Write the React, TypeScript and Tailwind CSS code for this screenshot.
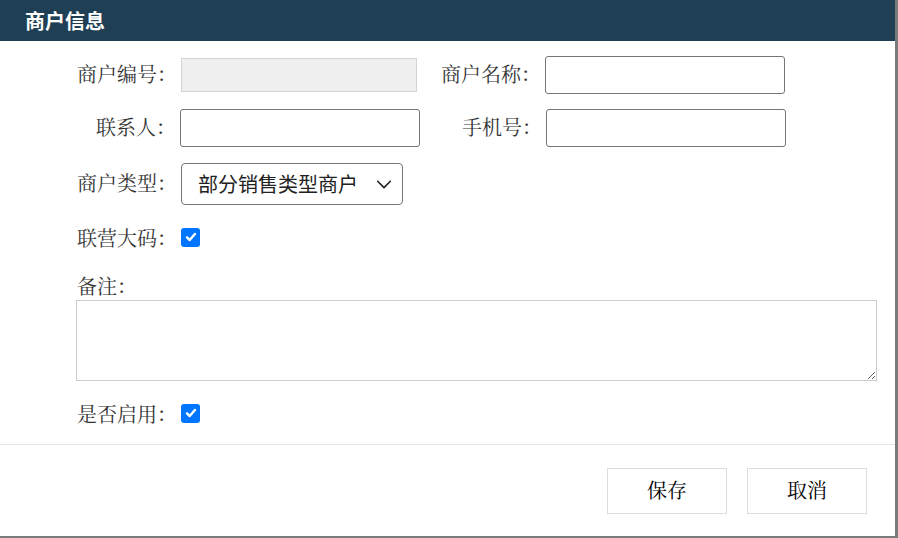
import React from "react";

const serif = { fontFamily: '"Liberation Serif", "Noto Serif CJK SC", "Noto Sans CJK SC", serif' };

function Label({ children, w = "w-[111px]" }: { children: React.ReactNode; w?: string }) {
  return (
    <label className={`${w} shrink-0 pr-[4px] text-right text-[20px] text-[#333]`} style={serif}>
      {children}
    </label>
  );
}

function Check() {
  return (
    <span className="mb-[4px] flex h-[19px] w-[19px] items-center justify-center rounded-[3px] bg-[#0075ff]">
      <svg viewBox="0 0 16 16" className="h-[14px] w-[14px]" fill="none" stroke="white" strokeWidth="2.8" strokeLinecap="round" strokeLinejoin="round">
        <path d="M3.5 8.5l3 3 6-7" />
      </svg>
    </span>
  );
}

export default function App() {
  return (
    <div className="flex h-[538px] w-[898px] bg-[#7a7a7a]" style={{ fontFamily: '"Noto Sans CJK SC", sans-serif' }}>
      <div className="flex h-[536px] w-[895px] flex-col bg-white">
        <div className="flex h-[41px] items-center bg-[#1f3f54] pl-[25px] text-[20px] font-bold text-white">商户信息</div>

        <div className="flex flex-col pl-[70px]">
          <div className="mt-[15px] flex items-center">
            <Label>商户编号：</Label>
            <div className="h-[34px] w-[236px] border border-[#d4d4d4] bg-[#efefef]" />
            <Label w="w-[128px]">商户名称：</Label>
            <input className="h-[38px] w-[240px] rounded-[3px] border border-[#767676] px-2" />
          </div>

          <div className="mt-[15px] flex items-center">
            <Label w="w-[110px]">联系人：</Label>
            <input className="h-[38px] w-[240px] rounded-[3px] border border-[#767676] px-2" />
            <Label w="w-[126px]">手机号：</Label>
            <input className="h-[38px] w-[240px] rounded-[3px] border border-[#767676] px-2" />
          </div>

          <div className="mt-[16px] flex items-center">
            <Label>商户类型：</Label>
            <div className="flex h-[42px] w-[222px] items-center justify-between rounded-[4px] border border-[#767676] pl-[16px] pr-[9px] text-[20px] text-[#222]">
              <span>部分销售类型商户</span>
              <svg viewBox="0 0 20 20" className="h-[18px] w-[18px]" fill="none" stroke="#222" strokeWidth="1.8" strokeLinecap="round" strokeLinejoin="round">
                <path d="M3 7l7 7 7-7" />
              </svg>
            </div>
          </div>

          <div className="mt-[19px] flex items-center">
            <Label>联营大码：</Label>
            <Check />
          </div>

          <div className="mt-[18px] pl-[7px] text-[20px] text-[#333]" style={serif}>备注：</div>
          <textarea className="-mt-[2px] ml-[6px] h-[81px] w-[801px] resize border border-[#cccccc]" />

          <div className="mt-[19px] flex items-center">
            <Label>是否启用：</Label>
            <Check />
          </div>
        </div>

        <div className="mt-auto flex h-[92px] items-start justify-end gap-[20px] border-t border-[#e5e5e5] pt-[23px] pr-[28px]">
          <button className="h-[46px] w-[120px] border border-[#dddddd] bg-white text-[20px] text-black" style={serif}>保存</button>
          <button className="h-[46px] w-[120px] border border-[#dddddd] bg-white text-[20px] text-black" style={serif}>取消</button>
        </div>
      </div>
    </div>
  );
}
